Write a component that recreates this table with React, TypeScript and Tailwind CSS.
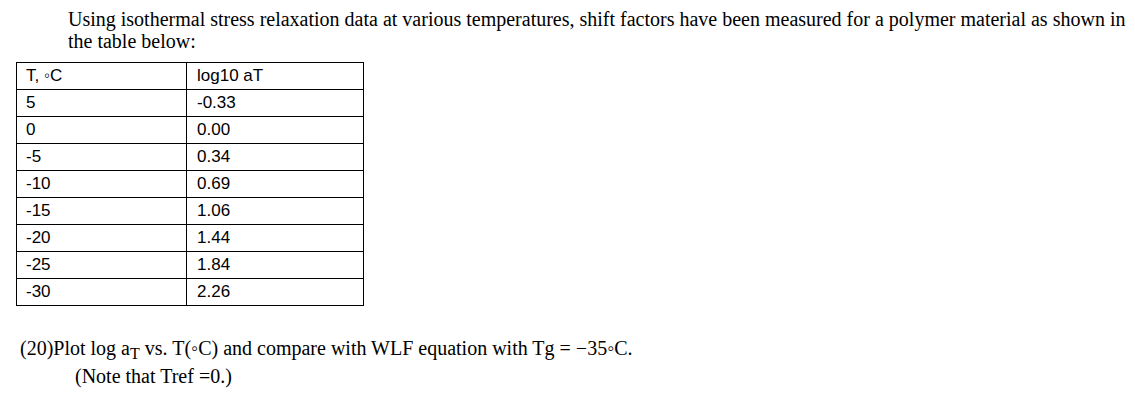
import React from 'react';

const rows: [string, string][] = [
  ['5', '-0.33'],
  ['0', '0.00'],
  ['-5', '0.34'],
  ['-10', '0.69'],
  ['-15', '1.06'],
  ['-20', '1.44'],
  ['-25', '1.84'],
  ['-30', '2.26'],
];

const App: React.FC = () => {
  return (
    <div className="w-[1135px] h-[406px] bg-white text-black overflow-hidden">
      {/* Intro paragraph */}
      <p className="pl-[68px] pt-[8px] font-['Liberation_Serif',serif] text-[20px] leading-[22px] whitespace-nowrap">
        Using isothermal stress relaxation data at various temperatures, shift factors have been measured for a polymer material as shown in
        <br />
        the table below:
      </p>

      {/* Shift factor table */}
      <table className="ml-[16px] mt-[10px] border-collapse font-['Liberation_Sans',Arial,sans-serif] text-[17px] leading-[20px]">
        <tbody>
          <tr className="h-[27px]">
            <td className="w-[170px] border border-black pl-[9px] align-middle">T, ◦C</td>
            <td className="w-[177px] border border-black pl-[10px] align-middle">log10 aT</td>
          </tr>
          {rows.map(([t, a]) => (
            <tr key={t} className="h-[27px]">
              <td className="border border-black pl-[9px] align-middle">{t}</td>
              <td className="border border-black pl-[10px] align-middle">{a}</td>
            </tr>
          ))}
        </tbody>
      </table>

      {/* Question */}
      <div className="pt-[29px] pl-[20px] font-['Liberation_Serif',serif] text-[20px] leading-[27px] whitespace-nowrap">
        <div>
          (20)Plot log a<span className="relative top-[4px] text-[16px]">T</span> vs. T(◦C) and compare with WLF equation with Tg = −35◦C.
        </div>
        <div className="pl-[55px]">(Note that Tref =0.)</div>
      </div>
    </div>
  );
};

export default App;
